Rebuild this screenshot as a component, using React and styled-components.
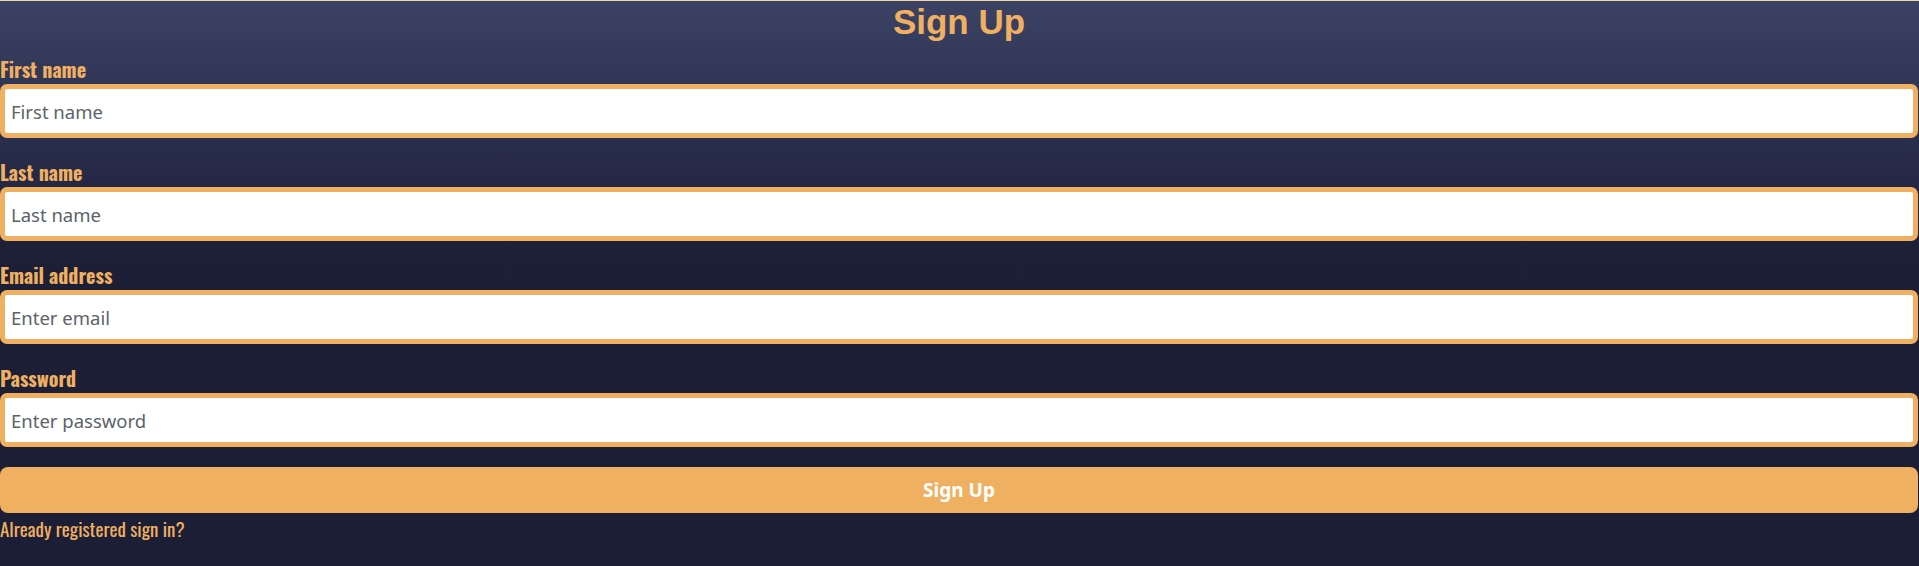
import React from "react";
import styled, { createGlobalStyle } from "styled-components";

const GlobalStyle = createGlobalStyle`
  html, body {
    margin: 0;
    padding: 0;
  }
  body {
    background: #1b1e35;
    font-family: "Noto Sans", "Liberation Sans", sans-serif;
  }
  * { box-sizing: border-box; }
`;

const Page = styled.div`
  min-height: 566px;
  border-top: 1px solid #f4d6a6;
  background: linear-gradient(180deg, #3c4263 0px, #2b3050 120px, #1c1f36 250px, #1b1e35 100%);
`;

const Form = styled.form`
  display: flex;
  flex-direction: column;
  width: 1918px;
`;

const Title = styled.h3`
  margin: 0 0 11px;
  font-family: "Liberation Sans", Arial, sans-serif;
  font-weight: 700;
  font-size: 35px;
  line-height: 42px;
  color: #f0b062;
  text-align: center;
`;

const Group = styled.div`
  display: flex;
  flex-direction: column;
  margin-bottom: 19px;
`;

const Label = styled.label`
  font-family: "Oswald", "Liberation Sans Narrow", "DejaVu Sans Condensed", sans-serif;
  font-weight: 700;
  font-size: 20px;
  line-height: 30px;
  color: #f0b062;
`;

const Input = styled.input`
  height: 54px;
  width: 100%;
  border: 5px solid #f0b062;
  border-radius: 7px;
  padding: 0 6px;
  font-family: "Noto Sans", "Open Sans", sans-serif;
  font-size: 18.5px;
  color: #212529;
  background: #fff;
  outline: none;
  &::placeholder {
    color: #5c636a;
    opacity: 1;
  }
`;

const Button = styled.button`
  height: 46px;
  width: 100%;
  margin-top: 1px;
  border: none;
  border-radius: 8px;
  background: #f0b062;
  color: #fff;
  font-family: "Noto Sans", "Open Sans", sans-serif;
  font-weight: 700;
  font-size: 19px;
  cursor: pointer;
`;

const Footer = styled.p`
  margin: 3px 0 0;
  font-family: "Oswald", "Liberation Sans Narrow", "DejaVu Sans Condensed", sans-serif;
  font-weight: 400;
  font-size: 19px;
  line-height: 24px;
  color: #f0b062;
`;

const fields = [
  { label: "First name", type: "text", placeholder: "First name" },
  { label: "Last name", type: "text", placeholder: "Last name" },
  { label: "Email address", type: "email", placeholder: "Enter email" },
  { label: "Password", type: "password", placeholder: "Enter password" },
];

export default function App() {
  return (
    <>
      <GlobalStyle />
      <Page>
        <Form onSubmit={(e) => e.preventDefault()}>
          <Title>Sign Up</Title>
          {fields.map((f) => (
            <Group key={f.label}>
              <Label>{f.label}</Label>
              <Input type={f.type} placeholder={f.placeholder} />
            </Group>
          ))}
          <Button type="submit">Sign Up</Button>
          <Footer>Already registered sign in?</Footer>
        </Form>
      </Page>
    </>
  );
}
